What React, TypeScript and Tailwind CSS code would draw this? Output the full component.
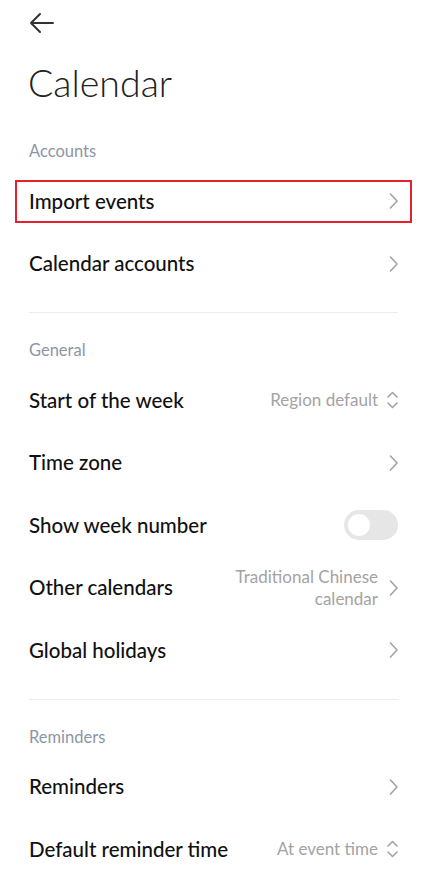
import { ReactNode } from "react";

const font = { fontFamily: '"Lato", "Noto Sans", sans-serif' };

function Chevron() {
  return (
    <svg width="12" height="18" viewBox="0 0 12 18" className="ml-2 shrink-0">
      <path d="M4.5 2l6.5 7-6.5 7" fill="none" stroke="#a3a3a3" strokeWidth="1.6" strokeLinecap="round" strokeLinejoin="round" />
    </svg>
  );
}

function UpDown() {
  return (
    <svg width="12" height="20" viewBox="0 0 12 20" className="ml-2 shrink-0">
      <path d="M2 7L6.5 2.5 11 7M2 13L6.5 17.5 11 13" fill="none" stroke="#a3a3a3" strokeWidth="1.6" strokeLinecap="round" strokeLinejoin="round" />
    </svg>
  );
}

function Header({ children }: { children: ReactNode }) {
  return <div className="px-[29px] pb-[9px] text-[16.5px] leading-[20px] text-[#8d95a5]">{children}</div>;
}

function Row({ label, value, right, highlight }: { label: string; value?: ReactNode; right?: ReactNode; highlight?: boolean }) {
  return (
    <div className="relative flex h-[62.5px] items-center px-[29px]">
      {highlight && <div className="absolute inset-x-[15px] top-[10px] bottom-[10px] border-2 border-[#e3222b]" />}
      <div className="flex-1 text-[20.5px] font-medium text-[#111]">{label}</div>
      {value && <div className="text-right text-[17px] leading-[22px] text-[#a3a3a3]">{value}</div>}
      {right ?? <Chevron />}
    </div>
  );
}

function Divider() {
  return <div className="mx-[29px] mt-[17px] mb-[27px] h-px bg-[#ececec]" />;
}

export default function App() {
  return (
    <div className="h-[876px] w-[427px] overflow-hidden bg-white" style={font}>
      <div className="flex h-[46px] items-center pl-[29px]">
        <svg width="26" height="24" viewBox="0 0 26 24">
          <path d="M2 12h22M11 3l-9 9 9 9" fill="none" stroke="#333" strokeWidth="2" strokeLinecap="round" strokeLinejoin="round" />
        </svg>
      </div>
      <div className="mt-[13px] px-[28px] text-[37.5px] font-light leading-[48px] text-[#222]">Calendar</div>
      <div className="mt-[34px]">
        <Header>Accounts</Header>
        <Row label="Import events" highlight />
        <Row label="Calendar accounts" />
      </div>
      <Divider />
      <Header>General</Header>
      <Row label="Start of the week" value="Region default" right={<UpDown />} />
      <Row label="Time zone" />
      <Row
        label="Show week number"
        right={
          <div className="flex h-[30px] w-[54px] items-center rounded-full bg-[#e6e6e6] px-[4px]">
            <div className="h-[22px] w-[22px] rounded-full bg-white" />
          </div>
        }
      />
      <Row label="Other calendars" value={<>Traditional Chinese<br />calendar</>} />
      <Row label="Global holidays" />
      <Divider />
      <Header>Reminders</Header>
      <Row label="Reminders" />
      <Row label="Default reminder time" value="At event time" right={<UpDown />} />
    </div>
  );
}
